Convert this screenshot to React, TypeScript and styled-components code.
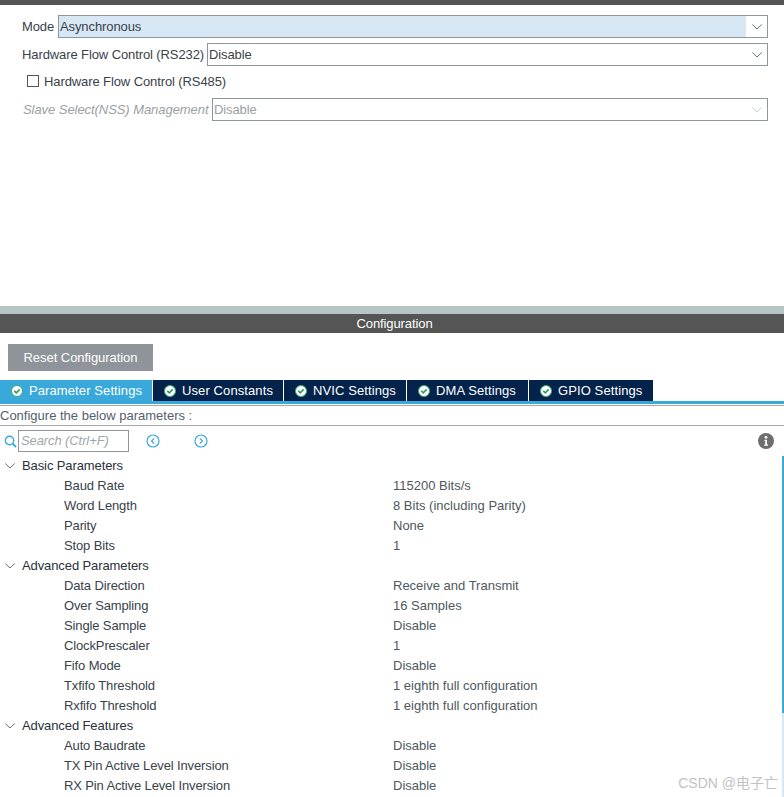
// App.tsx
import React from 'react';
import styled, { createGlobalStyle } from 'styled-components';

const GlobalStyle = createGlobalStyle`
  html, body {
    margin: 0;
    padding: 0;
    background: #fff;
    font-family: "Liberation Sans", Arial, "Noto Sans CJK SC", sans-serif;
    font-size: 13px;
    letter-spacing: -0.1px;
    color: #39424a;
  }
`;

const Page = styled.div`
  width: 784px;
  height: 797px;
  overflow: hidden;
  position: relative;
  display: flex;
  flex-direction: column;
`;

const TopBar = styled.div`
  height: 5px;
  background: #545554;
`;

const ModePanel = styled.div`
  height: 301px;
  box-sizing: border-box;
  padding: 8px 16px 0 22px;
  display: flex;
  flex-direction: column;
`;

const FormRow = styled.div<{ $height: number; $after?: number }>`
  display: flex;
  align-items: center;
  height: ${(p) => p.$height}px;
  margin-bottom: ${(p) => p.$after ?? 0}px;
`;

const FieldLabel = styled.span<{ $muted?: boolean; $width: number }>`
  width: ${(p) => p.$width}px;
  flex: none;
  white-space: nowrap;
  color: ${(p) => (p.$muted ? '#9b9fa3' : '#39424a')};
  font-style: ${(p) => (p.$muted ? 'italic' : 'normal')};
  letter-spacing: ${(p) => (p.$muted ? '-0.06px' : '-0.1px')};
  padding-left: ${(p) => (p.$muted ? '1px' : '0')};
  box-sizing: border-box;
`;

const Select = styled.div<{ $active?: boolean; $muted?: boolean }>`
  flex: 1;
  height: 23px;
  box-sizing: border-box;
  border: 1px solid #8f979c;
  display: flex;
  align-items: stretch;
  color: ${(p) => (p.$muted ? '#9b9fa3' : '#39424a')};
  span {
    flex: 1;
    padding-left: 1px;
    line-height: 21px;
    background: ${(p) => (p.$active ? '#d7e7f4' : '#fff')};
  }
`;

const SelectArrow = styled.div`
  width: 21px;
  display: flex;
  align-items: center;
  justify-content: center;
  background: #fff;
`;

const CheckRow = styled.label`
  display: flex;
  align-items: center;
  gap: 5px;
  height: 26px;
  margin-bottom: 4px;
  padding-left: 5px;
`;

const CheckBox = styled.span`
  width: 12px;
  height: 12px;
  box-sizing: border-box;
  border: 1px solid #555;
  background: #fff;
`;

const Splitter = styled.div`
  height: 8px;
  background: #b9c4c9;
`;

const PanelHeader = styled.div`
  height: 19px;
  line-height: 19px;
  background: #545554;
  color: #fff;
  text-align: center;
  padding-left: 5px;
`;

const ButtonRow = styled.div`
  height: 47px;
  box-sizing: border-box;
  padding: 11px 0 0 8px;
`;

const ResetButton = styled.button`
  width: 145px;
  height: 27px;
  padding: 0;
  border: none;
  background: #8e9499;
  color: #fff;
  font: inherit;
  letter-spacing: -0.05px;
`;

const TabBar = styled.div`
  display: flex;
  height: 21px;
`;

const Tab = styled.div<{ $active?: boolean; $width: number }>`
  display: flex;
  align-items: center;
  gap: 6px;
  box-sizing: border-box;
  width: ${(p) => p.$width}px;
  padding-left: 11px;
  white-space: nowrap;
  border-right: 1px solid #fff;
  background: ${(p) => (p.$active ? '#39a9db' : '#03234b')};
  color: #fff;
  letter-spacing: 0.1px;
  &:last-child {
    border-right: none;
  }
`;

const TabRule = styled.div`
  height: 3px;
  margin-bottom: 1px;
  background: #39a9db;
`;

const GreyRule = styled.div`
  height: 1px;
  background: #a5a8aa;
`;

const ConfigureLine = styled.div`
  height: 19px;
  line-height: 19px;
  color: #54606b;
  letter-spacing: 0;
`;

const SearchRow = styled.div`
  display: flex;
  align-items: center;
  height: 30px;
  padding-left: 4px;
`;

const SearchInput = styled.div`
  width: 111px;
  height: 22px;
  box-sizing: border-box;
  margin-left: 1px;
  border: 1px solid #8f979c;
  color: #a2a6a9;
  font-style: italic;
  line-height: 20px;
  padding-left: 2px;
`;

const NavButton = styled.span<{ $gap: number }>`
  display: flex;
  margin-left: ${(p) => p.$gap}px;
`;

const InfoButton = styled.span`
  display: flex;
  margin-left: auto;
  margin-right: 10px;
`;

const Tree = styled.div`
  display: flex;
  flex-direction: column;
`;

const GroupRow = styled.div`
  display: flex;
  align-items: center;
  box-sizing: border-box;
  height: 20px;
  padding: 0 0 1px 5px;
  gap: 7px;
  color: #29323a;
`;

const ParamRow = styled.div`
  display: grid;
  grid-template-columns: 329px 1fr;
  height: 20px;
  line-height: 20px;
  padding-left: 64px;
  letter-spacing: -0.13px;
`;

const ParamValue = styled.span`
  color: #4e5860;
  letter-spacing: 0;
`;

const ScrollTrack = styled.div`
  position: absolute;
  top: 456px;
  right: 0;
  bottom: 0;
  width: 2px;
  background: #d7e7f4;
`;

const ScrollThumb = styled.div`
  height: 257px;
  background: #39a9db;
`;

const Watermark = styled.div`
  position: absolute;
  right: 6px;
  bottom: 5px;
  color: #c2c2c2;
  font-size: 14px;
  letter-spacing: 0;
`;

const Chevron: React.FC<{ color?: string }> = ({ color = '#6c7175' }) => (
  <svg width="10" height="6" viewBox="0 0 10 6" fill="none">
    <path d="M0.3 0.5 L5 5 L9.7 0.5" stroke={color} strokeWidth="1" />
  </svg>
);

const CheckIcon: React.FC = () => (
  <svg width="12" height="12" viewBox="0 0 12 12">
    <circle cx="6" cy="6" r="5.5" fill="#fff" stroke="#3fa873" strokeWidth="1" />
    <path d="M3.3 5.9 L5.3 7.9 L8.7 4.4" fill="none" stroke="#2f9a66" strokeWidth="1.6" />
  </svg>
);

const SearchIcon: React.FC = () => (
  <svg width="13" height="13" viewBox="0 0 13 13" fill="none" stroke="#39a9db" strokeWidth="1.4">
    <circle cx="5.5" cy="5.5" r="4.2" />
    <path d="M8.6 8.6 L12 12" strokeWidth="1.8" />
  </svg>
);

const NavIcon: React.FC<{ dir: 'left' | 'right' }> = ({ dir }) => (
  <svg width="14" height="14" viewBox="0 0 14 14" fill="none" stroke="#39a9db">
    <circle cx="7" cy="7" r="6" strokeWidth="1.2" />
    <path d={dir === 'left' ? 'M8.2 4.4 L5.6 7 L8.2 9.6' : 'M5.8 4.4 L8.4 7 L5.8 9.6'} strokeWidth="1.2" />
  </svg>
);

const InfoIcon: React.FC = () => (
  <svg width="16" height="16" viewBox="0 0 16 16">
    <circle cx="8" cy="8" r="8" fill="#6e6e6e" />
    <circle cx="8" cy="4.3" r="1.4" fill="#fff" />
    <path d="M6.4 6.8 H9 V11.4 H10 V12.8 H6.2 V11.4 H7.2 V8.1 H6.4 Z" fill="#fff" />
  </svg>
);

const tabs: [string, number][] = [
  ['Parameter Settings', 153],
  ['User Constants', 131],
  ['NVIC Settings', 123],
  ['DMA Settings', 122],
  ['GPIO Settings', 124],
];

const groups: { title: string; params: [string, string][] }[] = [
  {
    title: 'Basic Parameters',
    params: [
      ['Baud Rate', '115200 Bits/s'],
      ['Word Length', '8 Bits (including Parity)'],
      ['Parity', 'None'],
      ['Stop Bits', '1'],
    ],
  },
  {
    title: 'Advanced Parameters',
    params: [
      ['Data Direction', 'Receive and Transmit'],
      ['Over Sampling', '16 Samples'],
      ['Single Sample', 'Disable'],
      ['ClockPrescaler', '1'],
      ['Fifo Mode', 'Disable'],
      ['Txfifo Threshold', '1 eighth full configuration'],
      ['Rxfifo Threshold', '1 eighth full configuration'],
    ],
  },
  {
    title: 'Advanced Features',
    params: [
      ['Auto Baudrate', 'Disable'],
      ['TX Pin Active Level Inversion', 'Disable'],
      ['RX Pin Active Level Inversion', 'Disable'],
    ],
  },
];

const App: React.FC = () => {
  return (
    <Page>
      <GlobalStyle />
      <TopBar />
      <ModePanel>
        <FormRow $height={27} $after={1}>
          <FieldLabel $width={36}>Mode</FieldLabel>
          <Select $active>
            <span>Asynchronous</span>
            <SelectArrow><Chevron /></SelectArrow>
          </Select>
        </FormRow>
        <FormRow $height={27}>
          <FieldLabel $width={185}>Hardware Flow Control (RS232)</FieldLabel>
          <Select>
            <span>Disable</span>
            <SelectArrow><Chevron /></SelectArrow>
          </Select>
        </FormRow>
        <CheckRow>
          <CheckBox />
          Hardware Flow Control (RS485)
        </CheckRow>
        <FormRow $height={23}>
          <FieldLabel $muted $width={190}>Slave Select(NSS) Management</FieldLabel>
          <Select $muted>
            <span>Disable</span>
            <SelectArrow><Chevron color="#c9cccf" /></SelectArrow>
          </Select>
        </FormRow>
      </ModePanel>
      <Splitter />
      <PanelHeader>Configuration</PanelHeader>
      <ButtonRow>
        <ResetButton>Reset Configuration</ResetButton>
      </ButtonRow>
      <TabBar>
        {tabs.map(([t, w], i) => (
          <Tab key={t} $active={i === 0} $width={w}>
            <CheckIcon />
            {t}
          </Tab>
        ))}
      </TabBar>
      <TabRule />
      <GreyRule />
      <ConfigureLine>Configure the below parameters :</ConfigureLine>
      <GreyRule />
      <SearchRow>
        <SearchIcon />
        <SearchInput>Search (Ctrl+F)</SearchInput>
        <NavButton $gap={17}><NavIcon dir="left" /></NavButton>
        <NavButton $gap={34}><NavIcon dir="right" /></NavButton>
        <InfoButton><InfoIcon /></InfoButton>
      </SearchRow>
      <Tree>
        {groups.map((g) => (
          <React.Fragment key={g.title}>
            <GroupRow>
              <Chevron />
              {g.title}
            </GroupRow>
            {g.params.map(([name, value]) => (
              <ParamRow key={name}>
                <span>{name}</span>
                <ParamValue>{value}</ParamValue>
              </ParamRow>
            ))}
          </React.Fragment>
        ))}
      </Tree>
      <ScrollTrack>
        <ScrollThumb />
      </ScrollTrack>
      <Watermark>CSDN @电子亡</Watermark>
    </Page>
  );
};

export default App;
